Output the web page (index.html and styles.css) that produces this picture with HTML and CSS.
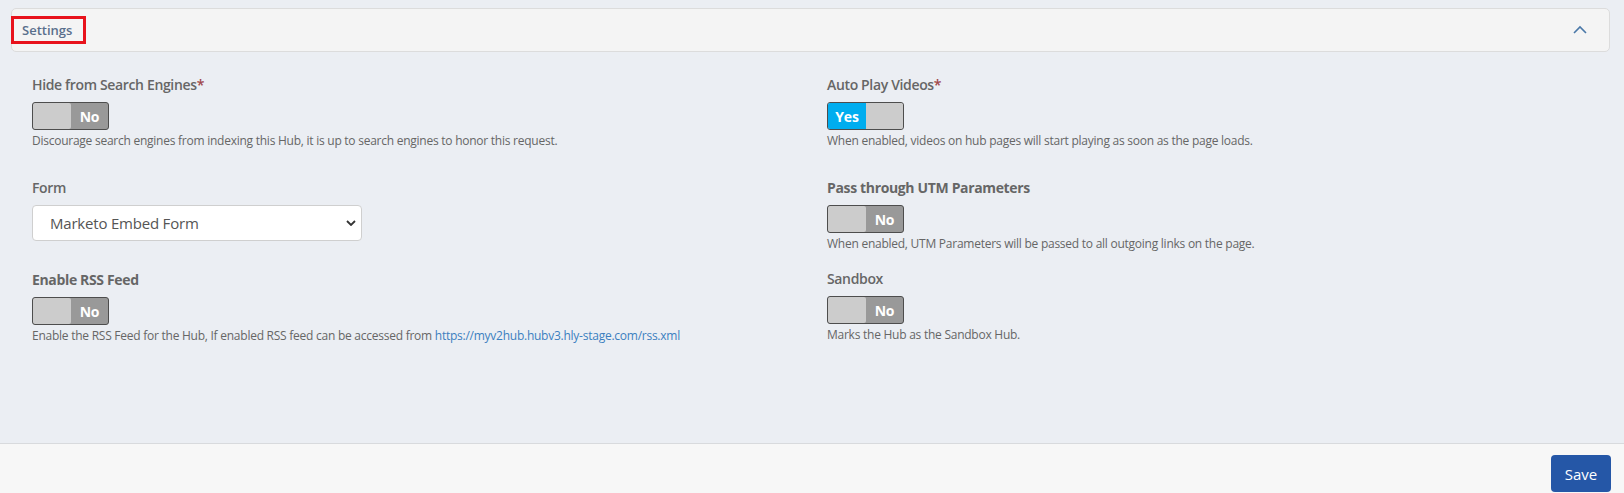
FILE: index.html
```html
<!DOCTYPE html>
<html lang="en">
<head>
<meta charset="utf-8">
<title>Settings</title>
<link rel="stylesheet" href="styles.css">
</head>
<body>
<div class="page">
  <main class="content">
    <section class="panel">
      <div class="panel-header">
        <span class="panel-title">Settings</span>
        <svg class="collapse-icon" width="14" height="9" viewBox="0 0 14 9" aria-hidden="true">
          <path d="M1 8 L7 2 L13 8" fill="none" stroke="#4a78a8" stroke-width="1.6"/>
        </svg>
      </div>
      <div class="settings">
        <div class="settings-col">
          <div class="form-group">
            <div class="label">Hide from Search Engines<span class="req">*</span></div>
            <div class="toggle toggle-off"><span class="knob"></span><span class="state">No</span></div>
            <p class="help">Discourage search engines from indexing this Hub, it is up to search engines to honor this request.</p>
          </div>
          <div class="form-group">
            <div class="label">Form</div>
            <div class="select-wrap">
              <select class="select">
                <option>Marketo Embed Form</option>
              </select>
              <svg class="select-arrow" width="10" height="6" viewBox="0 0 10 6" aria-hidden="true">
                <path d="M1 1 L5 5 L9 1" fill="none" stroke="#333" stroke-width="1.8"/>
              </svg>
            </div>
          </div>
          <div class="form-group">
            <div class="label label-bold">Enable RSS Feed</div>
            <div class="toggle toggle-off"><span class="knob"></span><span class="state">No</span></div>
            <p class="help">Enable the RSS Feed for the Hub, If enabled RSS feed can be accessed from <a class="link" href="#">https://myv2hub.hubv3.hly-stage.com/rss.xml</a></p>
          </div>
        </div>
        <div class="settings-col">
          <div class="form-group">
            <div class="label">Auto Play Videos<span class="req">*</span></div>
            <div class="toggle toggle-on"><span class="state">Yes</span><span class="knob"></span></div>
            <p class="help">When enabled, videos on hub pages will start playing as soon as the page loads.</p>
          </div>
          <div class="form-group form-group-tight">
            <div class="label label-bold">Pass through UTM Parameters</div>
            <div class="toggle toggle-off"><span class="knob"></span><span class="state">No</span></div>
            <p class="help">When enabled, UTM Parameters will be passed to all outgoing links on the page.</p>
          </div>
          <div class="form-group">
            <div class="label">Sandbox</div>
            <div class="toggle toggle-off"><span class="knob"></span><span class="state">No</span></div>
            <p class="help">Marks the Hub as the Sandbox Hub.</p>
          </div>
        </div>
      </div>
    </section>
  </main>
  <footer class="footer">
    <button class="btn-save" type="button">Save</button>
  </footer>
</div>
</body>
</html>
```

FILE: styles.css
```css
* { box-sizing: border-box; }

html, body {
  margin: 0;
  padding: 0;
}

body {
  font-family: "Open Sans", "Noto Sans", "Liberation Sans", sans-serif;
  color: #666;
  background: #ebeef3;
}

.page {
  display: flex;
  flex-direction: column;
  height: 493px;
}

.content {
  flex: 1;
  background: #ebeef3;
  padding: 8px 14px 0 11px;
}

.panel-header {
  height: 44px;
  background: #f4f4f4;
  border: 1px solid #dcdcdc;
  border-radius: 5px;
  display: flex;
  align-items: center;
  justify-content: space-between;
  padding-right: 22px;
}

.panel-title {
  margin-left: -1px;
  height: 28px;
  width: 75px;
  border: 3px solid #e8131c;
  display: flex;
  align-items: center;
  padding-left: 8px;
  font-size: 13px;
  font-weight: 600;
  color: #5a6f8c;
}

.collapse-icon {
  display: block;
  margin-top: -2px;
}

.settings {
  display: grid;
  grid-template-columns: 1fr 1fr;
  column-gap: 30px;
  padding: 23px 18px 0 21px;
}

.settings-col {
  display: flex;
  flex-direction: column;
}

.form-group {
  margin-bottom: 29px;
}

.form-group-tight {
  margin-bottom: 17px;
}

.label {
  font-size: 14px;
  line-height: 20px;
  font-weight: 600;
  color: #666;
  letter-spacing: -0.35px;
  margin-bottom: 7px;
}

.label-bold {
  font-weight: 700;
}

.req {
  color: #a0474a;
}

.toggle {
  width: 77px;
  height: 28px;
  border: 1px solid #4d4d4d;
  border-radius: 3px;
  display: flex;
  overflow: hidden;
}

.toggle-off { background: #999; }
.toggle-on { background: #ccc; }

.knob {
  width: 38px;
  background: #cccccc;
  border-radius: 2px;
}

.state {
  flex: 1;
  display: flex;
  align-items: center;
  justify-content: center;
  color: #fff;
  font-size: 14px;
  font-weight: 700;
  letter-spacing: -0.2px;
}

.toggle-on .state {
  flex: 0 0 38px;
  background: #00adef;
}

.toggle-on .knob {
  flex: 1;
}

.help {
  margin: 2px 0 0;
  font-size: 12px;
  line-height: 17px;
  color: #666;
  letter-spacing: -0.25px;
}

.link {
  color: #3b7fc0;
  text-decoration: none;
}

.select-wrap {
  position: relative;
  width: 330px;
}

.select {
  appearance: none;
  -webkit-appearance: none;
  width: 330px;
  height: 36px;
  border: 1px solid #cfcfcf;
  border-radius: 4px;
  background: #fff;
  padding: 0 30px 0 17px;
  font-family: "Open Sans", "Noto Sans", "Liberation Sans", sans-serif;
  font-size: 15px;
  letter-spacing: -0.2px;
  color: #555;
}

.select-arrow {
  position: absolute;
  right: 6px;
  top: 15px;
  pointer-events: none;
}

.footer {
  height: 50px;
  background: #f7f7f7;
  border-top: 1px solid #d8dadd;
  display: flex;
  justify-content: flex-end;
  align-items: flex-start;
  padding: 11px 13px 0 0;
}

.btn-save {
  width: 60px;
  height: 37px;
  background: #2557a7;
  color: #fff;
  border: 0;
  border-radius: 4px;
  font-family: "Open Sans", "Noto Sans", "Liberation Sans", sans-serif;
  font-size: 15px;
}
```
